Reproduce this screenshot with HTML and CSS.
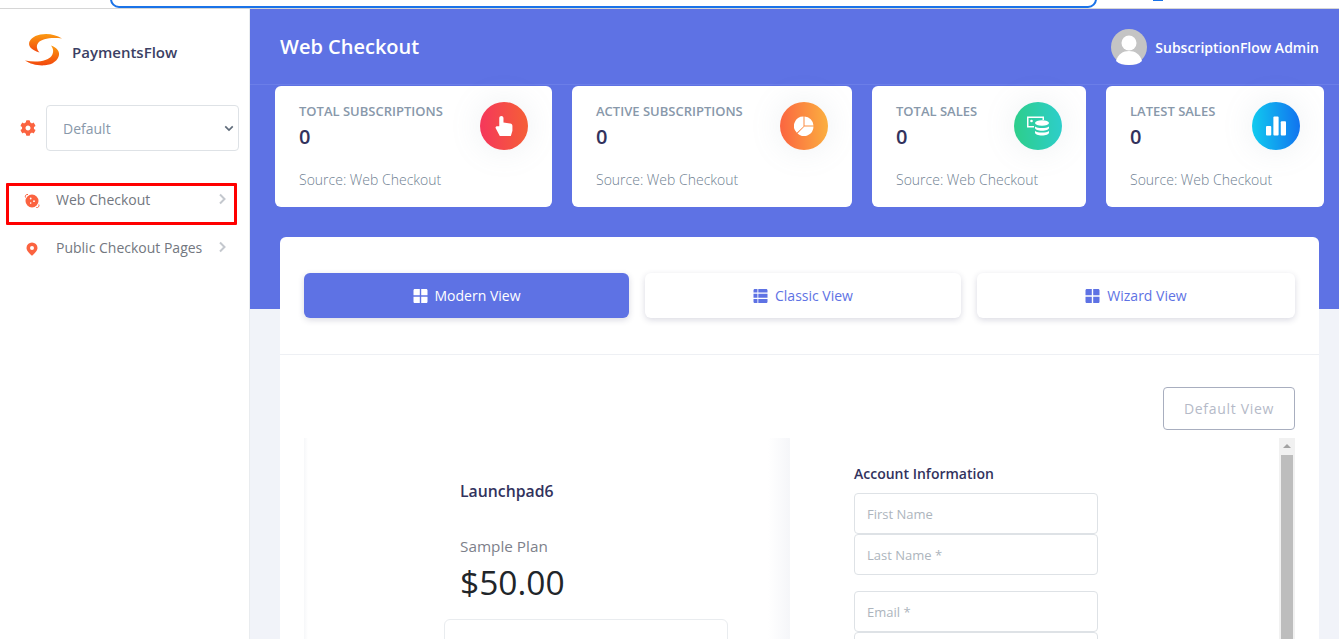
FILE: index.html
```html
<!DOCTYPE html>
<html lang="en">
<head>
    <meta charset="UTF-8">
    <meta name="viewport" content="width=device-width, initial-scale=1.0">
    <title>Web Checkout</title>
    <link rel="stylesheet" href="styles.css">
</head>
<body>

    <!-- browser strip along the top -->
    <div class="topstrip">
        <div class="urlbar"></div>
        <div class="urlmark"></div>
    </div>

    <div class="layout">
        <aside class="sidebar">
            <div class="brand">
                <svg class="brand-logo" viewBox="0 0 38 32">
                    <defs>
                        <linearGradient id="swoosh" x1="0" y1="0" x2="0" y2="1">
                            <stop offset="0" stop-color="#fb9a12"/>
                            <stop offset="1" stop-color="#f2470d"/>
                        </linearGradient>
                    </defs>
                    <path fill="url(#swoosh)" d="M38 4.500C33 1.500 28 0 22 0 14 0 7.500 3 5.500 7.500 3.800 11.800 7 16 15.500 18.500 12.500 15 12 11.500 14.500 8.500 17.500 5.300 26 3 38 4.500z"/>
                    <path fill="url(#swoosh)" d="M1 26.500C6 30 14 32 21 31.300c8-.7 13-5 14-10.300.6-4-2.500-7.500-8-9.500 2.500 3 3 7 .5 10.500-3.500 4.800-14 7-26.500 4.500z"/>
                </svg>
                <span class="brand-name">PaymentsFlow</span>
            </div>

            <div class="picker">
                <svg class="picker-icon" viewBox="0 0 512 512"><path d="M487.4 315.7l-42.6-24.6c4.3-23.2 4.3-47 0-70.2l42.6-24.6c4.9-2.8 7.1-8.6 5.5-14-11.1-35.6-30-67.8-54.7-94.6-3.8-4.1-10-5.1-14.8-2.3L380.8 110c-17.9-15.4-38.5-27.3-60.8-35.1V25.8c0-5.6-3.9-10.5-9.4-11.7-36.7-8.2-74.3-7.8-109.2 0-5.5 1.2-9.4 6.1-9.4 11.7V75c-22.2 7.9-42.8 19.8-60.8 35.1L88.7 85.5c-4.9-2.8-11-1.9-14.8 2.3-24.7 26.7-43.6 58.9-54.7 94.6-1.7 5.4.6 11.2 5.5 14L67.3 221c-4.3 23.2-4.3 47 0 70.2l-42.6 24.6c-4.9 2.8-7.1 8.6-5.5 14 11.1 35.6 30 67.8 54.7 94.6 3.8 4.1 10 5.1 14.8 2.3l42.6-24.6c17.9 15.4 38.5 27.3 60.8 35.1v49.2c0 5.6 3.9 10.5 9.4 11.7 36.7 8.2 74.3 7.8 109.2 0 5.5-1.2 9.4-6.1 9.4-11.7v-49.2c22.2-7.9 42.8-19.8 60.8-35.1l42.6 24.6c4.9 2.8 11 1.9 14.8-2.3 24.7-26.7 43.6-58.9 54.7-94.6 1.5-5.5-.7-11.3-5.6-14.1zM256 336c-44.1 0-80-35.9-80-80s35.9-80 80-80 80 35.9 80 80-35.9 80-80 80z"/></svg>
                <div class="picker-select">
                    <span>Default</span>
                    <svg class="picker-caret" viewBox="0 0 12 8"><path d="M1.5 1.5L6 6l4.5-4.5"/></svg>
                </div>
            </div>

            <nav class="nav">
                <a class="nav-item nav-item-marked">
                    <svg class="nav-icon" viewBox="0 0 16 16">
                        <path class="nav-ring" d="M1.500 4.500C.8 2.800 2 1 4 1.500M14.800 11.500c.7 1.700-.5 3.500-2.500 3"/>
                        <path fill-rule="evenodd" d="M8 1.500a6.500 6.500 0 1 1 0 13 6.500 6.500 0 0 1 0-13zM6.700 4.600a.9.9 0 1 0 0 1.800.9.9 0 0 0 0-1.800zm3.300 2.700a.9.9 0 1 0 0 1.800.9.9 0 0 0 0-1.800zM6.700 9.300a.8.8 0 1 0 0 1.600.8.8 0 0 0 0-1.600z"/>
                    </svg>
                    <span class="nav-label">Web Checkout</span>
                    <svg class="nav-arrow" viewBox="0 0 8 12"><path d="M2 1.500L6.500 6 2 10.500"/></svg>
                </a>
                <a class="nav-item">
                    <svg class="nav-icon" viewBox="0 0 16 16"><path fill-rule="evenodd" d="M8 1.500a5.500 5.500 0 0 1 5.500 5.500c0 3-3.500 5.800-5.500 7.800C6 12.800 2.500 10 2.500 7A5.500 5.500 0 0 1 8 1.500zm0 3.500a2 2 0 1 0 0 4 2 2 0 0 0 0-4z"/></svg>
                    <span class="nav-label">Public Checkout Pages</span>
                    <svg class="nav-arrow" viewBox="0 0 8 12"><path d="M2 1.500L6.500 6 2 10.500"/></svg>
                </a>
            </nav>
        </aside>

        <main class="main">
            <div class="band">
                <header class="header">
                    <h1 class="title">Web Checkout</h1>
                    <div class="user">
                        <svg class="avatar" viewBox="0 0 36 36">
                            <circle cx="18" cy="18" r="18" fill="#c4c4c4"/>
                            <circle cx="18" cy="14" r="7.500" fill="#fff"/>
                            <path d="M5 32c2-7 7-10 13-10s11 3 13 10c-3 3-8 4-13 4S8 35 5 32z" fill="#fff"/>
                        </svg>
                        <span class="user-name">SubscriptionFlow Admin</span>
                    </div>
                </header>

                <section class="stats">
                    <div class="stat">
                        <div class="stat-body">
                            <div class="stat-label">TOTAL SUBSCRIPTIONS</div>
                            <div class="stat-value">0</div>
                        </div>
                        <div class="stat-badge badge-red">
                            <svg viewBox="0 0 16 19"><path d="M3.500 2c0-1.100.9-2 2-2s2 .9 2 2v4.200l6.500 1c1.200.2 2 1.100 2 2.300v4.500L14.500 19H4L0 11.500C-.2 10.500.5 9.800 1.500 9.800h2z"/></svg>
                        </div>
                        <div class="stat-source">Source: Web Checkout</div>
                    </div>
                    <div class="stat">
                        <div class="stat-body">
                            <div class="stat-label">ACTIVE SUBSCRIPTIONS</div>
                            <div class="stat-value">0</div>
                        </div>
                        <div class="stat-badge badge-orange">
                            <svg viewBox="0 0 20 20"><path d="M10.500.5A9.500 9.500 0 0 1 19.500 9.500h-9zM9.500.5v10l-6.700 6.300A9.500 9.500 0 0 1 9.500.5zM19.500 10.500a9.500 9.500 0 0 1-16 7l6.900-7z"/></svg>
                        </div>
                        <div class="stat-source">Source: Web Checkout</div>
                    </div>
                    <div class="stat">
                        <div class="stat-body">
                            <div class="stat-label">TOTAL SALES</div>
                            <div class="stat-value">0</div>
                        </div>
                        <div class="stat-badge badge-green">
                            <svg class="badge-icon-wide" viewBox="0 0 22 19">
                                <path d="M0 0h17v3.500h-1.500v-2H1.500v8H7V11H0z"/>
                                <circle cx="4.500" cy="4.500" r="1.300"/>
                                <ellipse cx="15" cy="6.500" rx="7" ry="2.800"/>
                                <path d="M8 10c1.500 1 4 1.500 7 1.500s5.500-.5 7-1.500v1.500c0 1.500-3.100 2.700-7 2.700s-7-1.200-7-2.700z"/>
                                <path d="M8 14.500c1.500 1 4 1.500 7 1.500s5.500-.5 7-1.500v1.800c0 1.500-3.100 2.700-7 2.700s-7-1.200-7-2.700z"/>
                            </svg>
                        </div>
                        <div class="stat-source">Source: Web Checkout</div>
                    </div>
                    <div class="stat">
                        <div class="stat-body">
                            <div class="stat-label">LATEST SALES</div>
                            <div class="stat-value">0</div>
                        </div>
                        <div class="stat-badge badge-blue">
                            <svg viewBox="0 0 21 20"><rect x="0" y="10" width="5.500" height="10" rx="1"/><rect x="7.750" y="0" width="5.500" height="20" rx="1"/><rect x="15.500" y="5" width="5.500" height="15" rx="1"/></svg>
                        </div>
                        <div class="stat-source">Source: Web Checkout</div>
                    </div>
                </section>
            </div>

            <div class="panel">
                <div class="tabs">
                    <a class="tab tab-active">
                        <svg class="tab-icon" viewBox="0 0 16 16"><path d="M0 1.500C0 .7.700 0 1.500 0h5.700v7.200H0zM8.800 0h5.700c.8 0 1.500.7 1.500 1.500v5.700H8.800zM0 8.800h7.200V16H1.500C.7 16 0 15.300 0 14.500zM8.800 8.800H16v5.700c0 .8-.7 1.500-1.500 1.500H8.800z"/></svg>
                        Modern View
                    </a>
                    <a class="tab">
                        <svg class="tab-icon" viewBox="0 0 16 16"><path d="M0 1.500C0 .7.700 0 1.500 0h3v4H0zM5.500 0h9c.8 0 1.500.7 1.500 1.500V4H5.500zM0 5.500h4.500v4.500H0zM5.500 5.500H16v4.500H5.500zM0 11.500h4.500V16h-3C.7 16 0 15.300 0 14.500zM5.500 11.500H16v3c0 .8-.7 1.500-1.500 1.500h-9z"/></svg>
                        Classic View
                    </a>
                    <a class="tab">
                        <svg class="tab-icon" viewBox="0 0 16 16"><path d="M0 1.500C0 .7.700 0 1.500 0h5.700v7.200H0zM8.800 0h5.700c.8 0 1.500.7 1.500 1.500v5.700H8.800zM0 8.800h7.200V16H1.500C.7 16 0 15.300 0 14.500zM8.800 8.800H16v5.700c0 .8-.7 1.500-1.500 1.500H8.800z"/></svg>
                        Wizard View
                    </a>
                </div>

                <div class="panel-body">
                    <div class="panel-actions">
                        <button class="default-btn" type="button">Default View</button>
                    </div>

                    <div class="frame">
                        <div class="plan">
                            <div class="plan-name">Launchpad6</div>
                            <div class="plan-title">Sample Plan</div>
                            <div class="plan-price">$50.00</div>
                            <div class="plan-box"></div>
                        </div>
                        <form class="account">
                            <div class="account-title">Account Information</div>
                            <input class="field" type="text" placeholder="First Name">
                            <input class="field" type="text" placeholder="Last Name *">
                            <input class="field field-gap" type="text" placeholder="Email *">
                            <input class="field" type="text">
                        </form>
                        <div class="scrollbar">
                            <div class="scrollbar-up"></div>
                            <div class="scrollbar-thumb"></div>
                        </div>
                    </div>
                </div>
            </div>
        </main>
    </div>

</body>
</html>
```

FILE: styles.css
```css
html, body {
    height: 100%;
}
body {
    margin: 0;
    overflow: hidden;
    font-family: "Open Sans", "Liberation Sans", sans-serif;
    background-color: #f1f3f9;
    color: #32325d;
}
a {
    text-decoration: none;
}

/* top strip */
.topstrip {
    height: 8px;
    background-color: #fff;
    border-bottom: 1px solid #d6d6d6;
    display: flex;
    overflow: hidden;
}
.urlbar {
    width: 983px;
    height: 14px;
    margin: -10px 0 0 110px;
    border: 2px solid #1a73e8;
    border-radius: 12px;
}
.urlmark {
    width: 10px;
    height: 1px;
    margin: 0 0 0 56px;
    background-color: #1a73e8;
}

.layout {
    display: flex;
    height: 630px;
    overflow: hidden;
}

/* sidebar */
.sidebar {
    width: 249px;
    flex-shrink: 0;
    background-color: #fff;
    border-right: 1px solid #e9ecef;
}
.brand {
    display: flex;
    align-items: center;
    height: 34px;
    padding: 24px 0 0 24px;
}
.brand-logo {
    width: 38px;
    height: 32px;
}
.brand-name {
    margin-left: 10px;
    margin-top: 4px;
    font-size: 15px;
    font-weight: 600;
    color: #3b3f64;
}
.picker {
    display: flex;
    align-items: center;
    margin-top: 38px;
    padding-left: 20px;
}
.picker-icon {
    width: 16px;
    height: 16px;
    flex-shrink: 0;
    fill: #fb6340;
}
.picker-select {
    display: flex;
    align-items: center;
    justify-content: space-between;
    width: 193px;
    height: 46px;
    margin-left: 10px;
    padding: 0 4px 0 16px;
    background-color: #fff;
    border: 1px solid #dee2e6;
    border-radius: 4px;
    box-sizing: border-box;
    font-size: 14px;
    color: #8898aa;
}
.picker-caret {
    width: 10px;
    height: 7px;
    fill: none;
    stroke: #5f6b7a;
    stroke-width: 2;
}
.nav {
    margin-top: 32px;
}
.nav-item {
    display: flex;
    align-items: center;
    height: 42px;
    margin: 0 12px 6px 6px;
    padding: 0 0 6px 15px;
    border: 3px solid transparent;
    box-sizing: border-box;
    font-size: 14px;
    color: #737780;
}
.nav-item-marked {
    border-color: #f00;
    border-radius: 1px;
}
.nav-icon {
    width: 16px;
    height: 16px;
    fill: #fb6340;
}
.nav-ring {
    fill: none;
    stroke: #fb6340;
    stroke-width: 1;
}
.nav-label {
    margin-left: 16px;
    flex: 1;
    margin-top: -3px;
}
.nav-arrow {
    width: 8px;
    height: 12px;
    margin: -4px 8px 0 0;
    fill: none;
    stroke: #c4c8ce;
    stroke-width: 2;
}

/* main column */
.main {
    flex: 1;
    min-width: 0;
    position: relative;
}
.band {
    height: 300px;
    background-color: #5e72e4;
}
.header {
    display: flex;
    align-items: center;
    justify-content: space-between;
    height: 76px;
    padding: 0 20px 0 30px;
    border-bottom: 1px solid #6b7ee8;
    box-sizing: border-box;
}
.title {
    margin: 0;
    font-size: 20px;
    font-weight: 600;
    color: #fff;
}
.user {
    display: flex;
    align-items: center;
}
.avatar {
    width: 36px;
    height: 36px;
}
.user-name {
    margin-left: 8px;
    margin-top: 1px;
    font-size: 14px;
    font-weight: 600;
    color: #fff;
}

/* stat cards */
.stats {
    display: grid;
    grid-template-columns: 277px 280px 214px 218px;
    gap: 20px;
    margin: 1px 0 0 25px;
}
.stat {
    display: grid;
    grid-template-columns: 1fr 48px;
    grid-template-rows: 64px 1fr;
    height: 121px;
    padding: 16px 24px 0 24px;
    background-color: #fff;
    border-radius: 6px;
    box-sizing: border-box;
}
.stat-label {
    margin-top: 1px;
    font-size: 13px;
    line-height: 17px;
    font-weight: 600;
    color: #8898aa;
}
.stat-value {
    margin-top: 3px;
    font-size: 20px;
    line-height: 27px;
    font-weight: 560;
    color: #32325d;
}
.stat-badge {
    display: flex;
    align-items: center;
    justify-content: center;
    width: 48px;
    height: 48px;
    border-radius: 50%;
    box-shadow: 0 0 32px rgba(136, 152, 170, .15);
}
.stat-badge svg {
    width: 20px;
    height: 20px;
    fill: #fff;
}
.stat-badge .badge-icon-wide {
    width: 22px;
}
.badge-red {
    background-image: linear-gradient(87deg, #f5365c, #f56036);
}
.badge-orange {
    background-image: linear-gradient(87deg, #fb6340, #fbb140);
}
.badge-green {
    background-image: linear-gradient(87deg, #2dce89, #2dcecc);
}
.badge-blue {
    background-image: linear-gradient(87deg, #11cdef, #1171ef);
}
.stat-source {
    grid-column: 1 / 3;
    margin-top: 4px;
    font-size: 14px;
    line-height: 19px;
    font-weight: 300;
    color: #6f7f92;
}

/* white panel under the cards */
.panel {
    position: absolute;
    top: 228px;
    left: 30px;
    right: 20px;
    bottom: 0;
    overflow: hidden;
    background-color: #fff;
    border-radius: 6px 6px 0 0;
}
.tabs {
    display: grid;
    grid-template-columns: 325px 316px 318px;
    gap: 16px;
    height: 118px;
    padding: 36px 24px 0 24px;
    border-bottom: 1px solid #eef0f4;
    box-sizing: border-box;
}
.tab {
    display: flex;
    align-items: center;
    justify-content: center;
    gap: 7px;
    height: 45px;
    background-color: #fff;
    border-radius: 6px;
    box-shadow: 0 2px 6px rgba(50, 50, 93, .18);
    font-size: 14px;
    color: #5e72e4;
}
.tab-active {
    background-color: #5e72e4;
    color: #fff;
}
.tab-icon {
    width: 15px;
    height: 14px;
    fill: currentColor;
}
.panel-body {
    padding: 32px 24px 0 24px;
}
.panel-actions {
    display: flex;
    justify-content: flex-end;
}
.default-btn {
    width: 132px;
    height: 43px;
    background-color: #fff;
    border: 1px solid #a8aebf;
    border-radius: 4px;
    font-family: inherit;
    font-size: 14px;
    font-weight: 500;
    letter-spacing: .7px;
    color: #b5bac8;
}

/* checkout embed */
.frame {
    display: flex;
    height: 201px;
    margin-top: 8px;
    overflow: hidden;
}
.plan {
    width: 486px;
    padding-top: 42px;
    box-sizing: border-box;
    background-image: linear-gradient(90deg, #f6f7f9 0, #fff 4px, #fff 464px, #f5f6f9 486px);
}
.plan-name {
    margin-left: 156px;
    font-size: 15.8px;
    line-height: 22px;
    font-weight: 600;
    color: #32325d;
}
.plan-title {
    margin: 34px 0 0 156px;
    font-size: 15.3px;
    line-height: 20px;
    font-weight: 500;
    color: #7d7f8a;
}
.plan-price {
    margin: 3px 0 0 156px;
    font-size: 33.5px;
    line-height: 46px;
    font-weight: 500;
    color: #212529;
}
.plan-box {
    width: 284px;
    height: 60px;
    margin: 14px 0 0 140px;
    border: 1px solid #e9ecef;
    border-radius: 6px;
    box-sizing: border-box;
}
.account {
    flex: 1;
    display: flex;
    flex-direction: column;
    align-items: flex-start;
    padding: 26px 0 0 64px;
}
.account-title {
    font-size: 14px;
    line-height: 19px;
    font-weight: 600;
    color: #32325d;
    margin-bottom: 10px;
}
.field {
    width: 244px;
    height: 41px;
    flex-shrink: 0;
    padding: 0 12px;
    background-color: #fff;
    border: 1px solid #dee2e6;
    border-radius: 4px;
    box-sizing: border-box;
    font-family: inherit;
    font-size: 13px;
}
.field::placeholder {
    color: #adb5bd;
}
.field-gap {
    margin-top: 16px;
}
.scrollbar {
    width: 16px;
    flex-shrink: 0;
    background-color: #f1f1f1;
}
.scrollbar-up {
    width: 0;
    height: 0;
    margin: 0 auto;
    position: relative;
    top: 6px;
    border-left: 4px solid transparent;
    border-right: 4px solid transparent;
    border-bottom: 4px solid #a3a3a3;
}
.scrollbar-thumb {
    height: 190px;
    margin: 13px 2px 0 2px;
    background-color: #bdbdbd;
}
```
